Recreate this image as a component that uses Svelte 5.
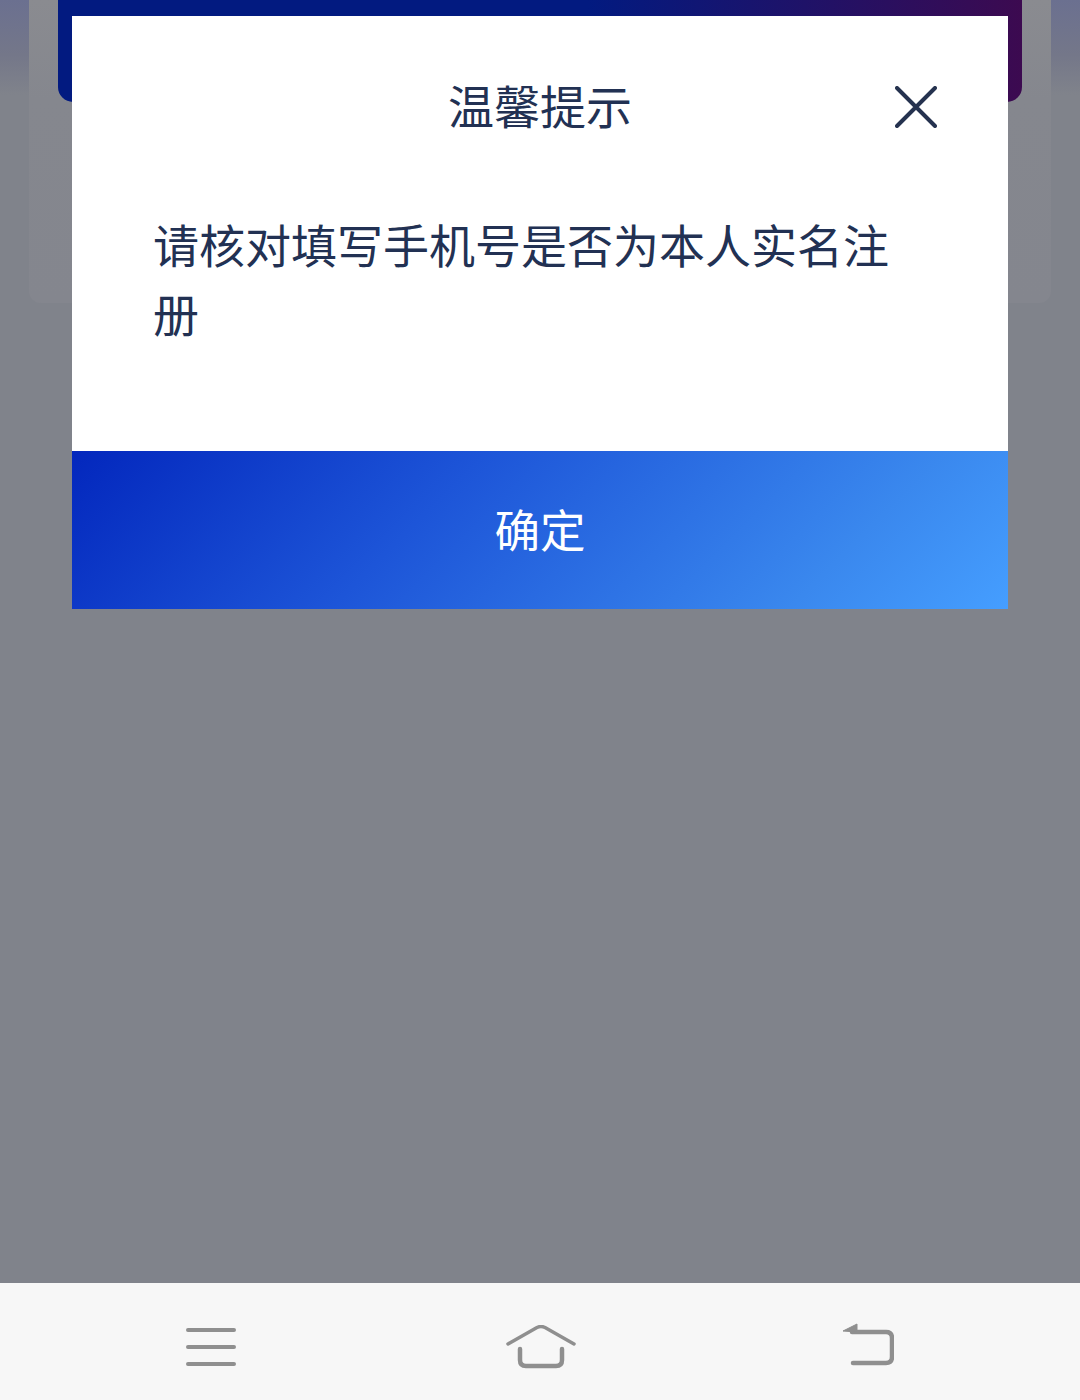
<script lang="ts">
  let title = '温馨提示';
  let message = '请核对填写手机号是否为本人实名注册';
  let confirmText = '确定';
</script>

<div class="screen">
  <main class="page">
    <div class="card">
      <div class="hero"></div>
    </div>

    <!-- dimmed layer with the dialog -->
    <div class="overlay">
      <div class="dialog">
        <header class="head">
          <span class="title">{title}</span>
          <button class="close" aria-label="关闭">
            <svg width="42" height="42" viewBox="0 0 42 42" fill="none">
              <path d="M2 2L40 40M40 2L2 40" stroke="#25324f" stroke-width="4" stroke-linecap="round" />
            </svg>
          </button>
        </header>
        <p class="message">{message}</p>
        <button class="confirm">{confirmText}</button>
      </div>
    </div>
  </main>

  <nav class="navbar">
    <svg class="nav-icon" width="50" height="38" viewBox="0 0 50 38" fill="none">
      <path d="M2 2H48M2 19H48M2 36H48" stroke="#8f8f8f" stroke-width="4" stroke-linecap="round" />
    </svg>
    <svg class="nav-icon" width="70" height="44" viewBox="0 0 70 44" fill="none">
      <path d="M2 19L31 2.5Q35 0.5 39 2.5L68 19" stroke="#8f8f8f" stroke-width="3.5" stroke-linecap="round" stroke-linejoin="round" />
      <path d="M14 24V35Q14 41 20 41H50Q56 41 56 35V24" stroke="#8f8f8f" stroke-width="4.5" stroke-linecap="round" />
    </svg>
    <svg class="nav-icon back" width="52" height="43" viewBox="0 0 52 43" fill="none">
      <path d="M10 9H44Q50 9 50 15V34Q50 40 44 40H11" stroke="#8f8f8f" stroke-width="4.5" stroke-linecap="round" />
      <path d="M1 8L15 1V9Z" fill="#8f8f8f" stroke="#8f8f8f" stroke-width="1" stroke-linejoin="round" />
    </svg>
  </nav>
</div>

<style>
  :global(body) {
    margin: 0;
    font-family: "Noto Sans CJK SC", "Noto Sans", sans-serif;
  }

  .screen {
    width: 1080px;
    height: 1400px;
    display: flex;
    flex-direction: column;
  }

  .page {
    position: relative;
    flex: 1;
    padding: 0 29px;
    background: linear-gradient(180deg, #6b7090 0, #747789 55px, #80838b 95px);
  }

  .card {
    height: 303px;
    box-sizing: border-box;
    padding: 0 29px;
    border-radius: 0 0 12px 12px;
    background: linear-gradient(180deg, #8a8b90 0, #85878e 100px, #84868e 100%);
  }

  .hero {
    height: 102px;
    border-radius: 0 0 15px 15px;
    background: linear-gradient(90deg, #021a80 0, #021a80 55%, #3c0a50 100%);
  }

  .overlay {
    position: absolute;
    inset: 0;
    padding: 16px 72px 0;
  }

  .dialog {
    display: flex;
    flex-direction: column;
    background: #fff;
    color: #223153;
  }

  .head {
    position: relative;
    height: 176px;
    padding-bottom: 6px;
    display: flex;
    align-items: center;
    justify-content: center;
  }

  .title {
    font-size: 46px;
    line-height: 66px;
  }

  .close {
    position: absolute;
    right: 71px;
    top: 70px;
    padding: 0;
    border: 0;
    background: none;
    display: flex;
  }

  .message {
    margin: 0;
    height: 253px;
    box-sizing: border-box;
    padding: 11px 118px 0 81px;
    font-size: 46px;
    line-height: 69px;
  }

  .confirm {
    height: 158px;
    border: 0;
    padding: 0 0 4px;
    color: #fff;
    font-family: inherit;
    font-size: 45.5px;
    background: linear-gradient(135deg, #0327bd 0, #1d55d8 38%, #3a88ee 80%, #459eff 100%);
  }

  .navbar {
    height: 117px;
    box-sizing: border-box;
    padding-top: 11px;
    display: grid;
    grid-template-columns: 422px 238px 416px;
    background: #f7f7f7;
  }

  .nav-icon {
    align-self: center;
    justify-self: center;
  }

  .back {
    margin-bottom: 5px;
  }
</style>
